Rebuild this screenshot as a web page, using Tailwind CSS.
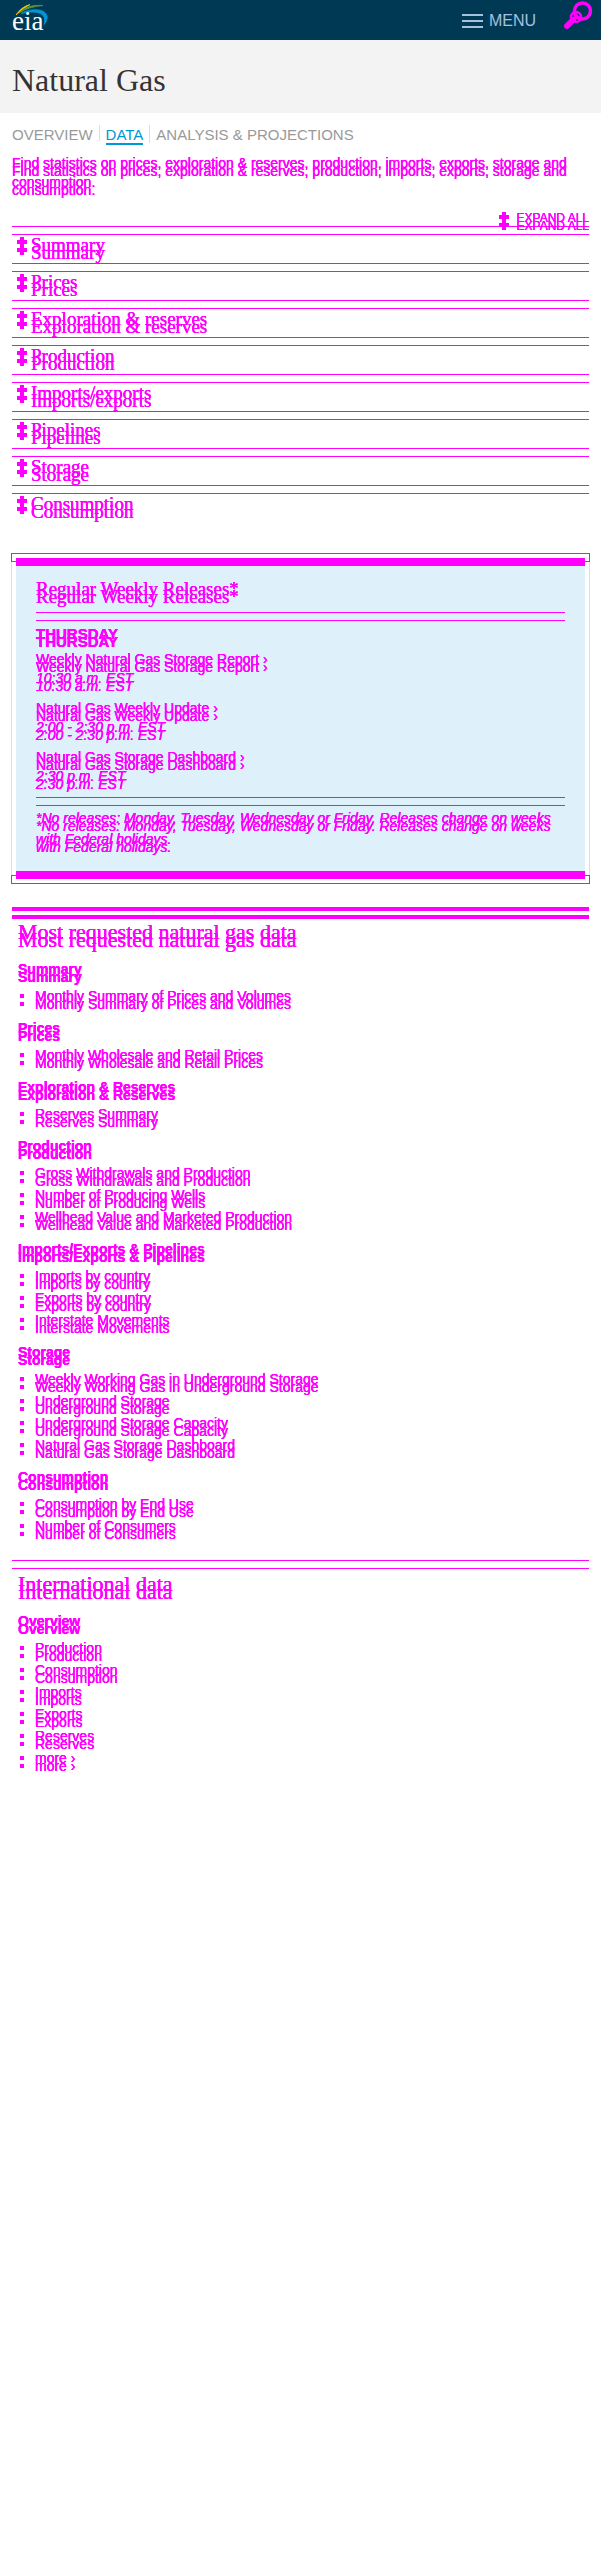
<!DOCTYPE html>
<html lang="en">
<head>
<meta charset="utf-8">
<meta name="viewport" content="width=device-width, initial-scale=1">
<title>Natural Gas Data</title>
<script src="https://cdn.jsdelivr.net/npm/@tailwindcss/browser@4"></script>
</head>
<body class="bg-white font-['Liberation_Sans',Arial,sans-serif] text-sm">
<svg class="hidden" aria-hidden="true">
  <symbol id="plus" viewBox="0 0 10 18"><path fill="#f0f" d="M3 0h4v3h3v4H7v1h0v3h3v4H7v3H3v-3H0v-4h3V7H0V3h3z"/></symbol>
</svg>
<header class="flex h-10 items-start bg-[#003953] pl-3 pr-2">
  <a href="#" aria-label="eia home">
    <svg class="mt-1 h-8 w-10" viewBox="0 0 40 32" fill="none">
      <path d="M4 11Q9 3 18 0.500Q10 5 4 11" fill="#ffc702" stroke="#ffc702" stroke-width=".8"/>
      <path d="M7 9Q15 0 31 1.500Q17 2.500 7 9" fill="#5d9732" stroke="#5d9732" stroke-width=".8"/>
      <path d="M9 9.500C20 3 37 5 35 15Q34.500 18 32 20.500C35 10 27 5.500 9 9.500" fill="#0096d7" stroke="#0096d7" stroke-width=".8"/>
      <text x="0" y="26" fill="#fff" font-family="Liberation Serif, serif" font-size="27">eia</text>
    </svg>
  </a>
  <button class="ml-auto flex h-[41px] items-center gap-1.5 text-base text-[#a4c1df]">
    <svg class="h-4 w-[21px]" viewBox="0 0 21 16" fill="#a4c1df"><path d="M0 1h21v2H0zM0 7h21v2H0zM0 13h21v2H0z"/></svg>
    MENU
  </button>
  <button class="ml-[27px] h-8 w-[30px]" aria-label="Search">
    <svg class="h-8 w-[30px]" viewBox="0 0 30 32" fill="none" stroke="#f0f">
      <circle cx="19.500" cy="11" r="8" stroke-width="3.500"/>
      <circle cx="13" cy="17" r="5" stroke-width="2.500"/>
      <circle cx="13" cy="17" r="1.500" stroke-width="2"/>
      <path d="M10 20l-6 6" stroke-width="6" stroke-linecap="round"/>
    </svg>
  </button>
</header>
<div class="h-[73px] bg-[#f3f3f3] px-3 pt-5">
  <h1 class="font-['Liberation_Serif',serif] text-[32px] leading-10 text-[#333]">Natural Gas</h1>
</div>
<nav class="flex h-12 items-start px-3 pt-3 text-[15px] leading-4 text-[#999]">
  <a href="#" class="pt-0.5 pr-1.5">OVERVIEW</a>
  <span class="h-4 w-px bg-[#ddd]"></span>
  <a href="#" class="mx-1.5 border-b-2 border-[#0096d7] pt-0.5 text-[#0096d7]">DATA</a>
  <span class="h-[18px] w-px bg-[#ddd]"></span>
  <a href="#" class="pt-0.5 pl-1.5">ANALYSIS &amp; PROJECTIONS</a>
</nav>
<main class="px-3 text-[#f0f] [text-shadow:0_0_#f0f,0_0_#f0f,0_-8px_#f0f,0_-8px_#f0f,0_-8px_#f0f] [&_button]:[text-shadow:inherit]">
  <p class="mt-px leading-[19px]">Find statistics on prices, exploration &amp; reserves, production, imports, exports, storage and consumption.</p>
  <div class="flex h-[34px] items-end justify-end">
    <button class="flex items-end gap-2 text-xs"><svg class="mb-1 h-[18px] w-2.5"><use href="#plus"/></svg>EXPAND ALL</button>
  </div>
  <div id="sections" class="font-['Liberation_Serif',serif] text-[19px] leading-6">
    <hr class="h-px border-0 bg-[#f0f] shadow-[0_-8px_#f0f]">
    <h2 class="h-9 pl-[5px]"><button class="flex items-start gap-1"><svg class="mt-0.5 h-[18px] w-2.5"><use href="#plus"/></svg><span class="pt-1.5">Summary</span></button></h2>
    <hr class="h-px border-0 bg-[#f0f] shadow-[0_-8px_#f0f]">
    <h2 class="h-9 pl-[5px]"><button class="flex items-start gap-1"><svg class="mt-0.5 h-[18px] w-2.5"><use href="#plus"/></svg><span class="pt-1.5">Prices</span></button></h2>
    <hr class="h-px border-0 bg-[#f0f] shadow-[0_-8px_#f0f]">
    <h2 class="h-9 pl-[5px]"><button class="flex items-start gap-1"><svg class="mt-0.5 h-[18px] w-2.5"><use href="#plus"/></svg><span class="pt-1.5">Exploration &amp; reserves</span></button></h2>
    <hr class="h-px border-0 bg-[#f0f] shadow-[0_-8px_#f0f]">
    <h2 class="h-9 pl-[5px]"><button class="flex items-start gap-1"><svg class="mt-0.5 h-[18px] w-2.5"><use href="#plus"/></svg><span class="pt-1.5">Production</span></button></h2>
    <hr class="h-px border-0 bg-[#f0f] shadow-[0_-8px_#f0f]">
    <h2 class="h-9 pl-[5px]"><button class="flex items-start gap-1"><svg class="mt-0.5 h-[18px] w-2.5"><use href="#plus"/></svg><span class="pt-1.5">Imports/exports</span></button></h2>
    <hr class="h-px border-0 bg-[#f0f] shadow-[0_-8px_#f0f]">
    <h2 class="h-9 pl-[5px]"><button class="flex items-start gap-1"><svg class="mt-0.5 h-[18px] w-2.5"><use href="#plus"/></svg><span class="pt-1.5">Pipelines</span></button></h2>
    <hr class="h-px border-0 bg-[#f0f] shadow-[0_-8px_#f0f]">
    <h2 class="h-9 pl-[5px]"><button class="flex items-start gap-1"><svg class="mt-0.5 h-[18px] w-2.5"><use href="#plus"/></svg><span class="pt-1.5">Storage</span></button></h2>
    <hr class="h-px border-0 bg-[#f0f] shadow-[0_-8px_#f0f]">
    <h2 class="h-9 pl-[5px]"><button class="flex items-start gap-1"><svg class="mt-0.5 h-[18px] w-2.5"><use href="#plus"/></svg><span class="pt-1.5">Consumption</span></button></h2>
  </div>
  <section class="relative -mx-px mt-[23px] border border-x-[#ddd] border-y-[#f0f] p-1">
    <span class="absolute -top-px -left-px h-[9px] w-[5px] border-b border-l border-[#f0f]"></span>
    <span class="absolute -top-px -right-px h-[9px] w-[5px] border-r border-b border-[#f0f]"></span>
    <span class="absolute -bottom-px -left-px h-[9px] w-[5px] border-t border-l border-[#f0f]"></span>
    <span class="absolute -right-px -bottom-px h-[9px] w-[5px] border-t border-r border-[#f0f]"></span>
    <div class="border-y-8 border-[#f0f] bg-[#def0fa] px-5 pt-[19px] pb-[13px]">
      <h2 class="font-['Liberation_Serif',serif] text-[19px] leading-6">Regular Weekly Releases*</h2>
      <hr class="mt-[11px] h-px border-0 bg-[#f0f] shadow-[0_-8px_#f0f]">
      <h3 class="mt-[11px] text-[15px] leading-[19px] font-bold">THURSDAY</h3>
      <div class="mt-[7px] flex flex-col gap-[11px] leading-[19px]">
        <p><a href="#">Weekly Natural Gas Storage Report ›</a><br><em>10:30 a.m. EST</em></p>
        <p><a href="#">Natural Gas Weekly Update ›</a><br><em>2:00 - 2:30 p.m. EST</em></p>
        <p><a href="#">Natural Gas Storage Dashboard ›</a><br><em>2:30 p.m. EST</em></p>
      </div>
      <hr class="mt-[11px] h-px border-0 bg-[#f0f] shadow-[0_-8px_#f0f]">
      <p class="mt-2.5 leading-[21px] italic">*No releases: Monday, Tuesday, Wednesday or Friday. Releases change on weeks with Federal holidays.</p>
    </div>
  </section>
  <hr class="mt-[31px] h-1 border-0 bg-[#f0f] shadow-[0_-8px_#f0f]">
  <section class="px-1.5 pt-2">
    <h2 class="font-['Liberation_Serif',serif] text-[22px] leading-[26px]">Most requested natural gas data</h2>
    <div class="mt-[15px] flex flex-col gap-3 [&_h3]:mb-1.5 [&_h3]:text-sm [&_h3]:leading-[19px] [&_h3]:font-bold [&_li]:flex [&_li]:items-center [&_li]:gap-[11px] [&_li]:pl-0.5 [&_li]:leading-[22px] [&_li]:before:size-1 [&_li]:before:bg-[#f0f] [&_li]:before:shadow-[0_-8px_#f0f]">
      <div><h3>Summary</h3><ul><li><a href="#">Monthly Summary of Prices and Volumes</a></li></ul></div>
      <div><h3>Prices</h3><ul><li><a href="#">Monthly Wholesale and Retail Prices</a></li></ul></div>
      <div><h3>Exploration &amp; Reserves</h3><ul><li><a href="#">Reserves Summary</a></li></ul></div>
      <div><h3>Production</h3><ul><li><a href="#">Gross Withdrawals and Production</a></li><li><a href="#">Number of Producing Wells</a></li><li><a href="#">Wellhead Value and Marketed Production</a></li></ul></div>
      <div><h3>Imports/Exports &amp; Pipelines</h3><ul><li><a href="#">Imports by country</a></li><li><a href="#">Exports by country</a></li><li><a href="#">Interstate Movements</a></li></ul></div>
      <div><h3>Storage</h3><ul><li><a href="#">Weekly Working Gas in Underground Storage</a></li><li><a href="#">Underground Storage</a></li><li><a href="#">Underground Storage Capacity</a></li><li><a href="#">Natural Gas Storage Dashboard</a></li></ul></div>
      <div><h3>Consumption</h3><ul><li><a href="#">Consumption by End Use</a></li><li><a href="#">Number of Consumers</a></li></ul></div>
    </div>
  </section>
  <hr class="mt-[23px] h-px border-0 bg-[#f0f] shadow-[0_-8px_#f0f]">
  <section class="px-1.5 pt-2.5">
    <h2 class="font-['Liberation_Serif',serif] text-[22px] leading-[26px]">International data</h2>
    <div class="mt-[15px] [&_h3]:mb-1.5 [&_h3]:text-sm [&_h3]:leading-[19px] [&_h3]:font-bold [&_li]:flex [&_li]:items-center [&_li]:gap-[11px] [&_li]:pl-0.5 [&_li]:leading-[22px] [&_li]:before:size-1 [&_li]:before:bg-[#f0f] [&_li]:before:shadow-[0_-8px_#f0f]">
      <h3>Overview</h3>
      <ul><li><a href="#">Production</a></li><li><a href="#">Consumption</a></li><li><a href="#">Imports</a></li><li><a href="#">Exports</a></li><li><a href="#">Reserves</a></li><li><a href="#">more ›</a></li></ul>
    </div>
  </section>
</main>
</body>
</html>
